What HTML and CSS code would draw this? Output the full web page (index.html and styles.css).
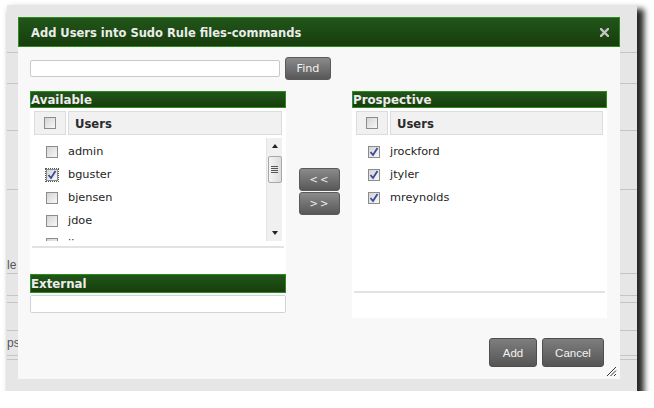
FILE: index.html
```html
<!DOCTYPE html>
<html>
<head>
<meta charset="utf-8">
<link rel="stylesheet" href="styles.css">
</head>
<body>
<div class="frame">
  <div class="page">
    <div class="prow r1"></div>
    <div class="prow r2"></div>
    <div class="prow r3"></div>
    <div class="prow r4"></div>
    <div class="prow r5"><span class="plabel">le <span class="colon">:</span></span></div>
    <div class="prow r6"></div>
    <div class="prow r7"></div>
    <div class="prow r8"></div>
    <div class="prow r9"><span class="plabel">ps<span class="colon">:</span></span></div>
    <div class="prow r10"></div>
  </div>

  <div class="dialog">
    <div class="titlebar">
      <span class="title">Add Users into Sudo Rule files-commands</span>
      <svg class="close" width="9" height="9" viewBox="0 0 9 9"><path d="M1 1 L8 8 M8 1 L1 8" stroke="#c4c4c4" stroke-width="2.4" stroke-linecap="square"/></svg>
    </div>
    <div class="body">
      <div class="search">
        <div class="search-input"></div>
        <div class="btn find">Find</div>
      </div>
      <div class="panels">
        <div class="col left">
          <div class="sect">Available</div>
          <div class="panel avail">
            <div class="thead">
              <div class="th th-check"><span class="cb"></span></div>
              <div class="th th-name">Users</div>
            </div>
            <div class="listwrap">
              <div class="list">
                <div class="row"><div class="cc"><span class="cb"></span></div><span class="name">admin</span></div>
                <div class="row"><div class="cc"><span class="cb on focus"><svg width="10" height="10" viewBox="0 0 10 10"><path d="M1.5 5 L4 8 L8.5 1" fill="none" stroke="#3a4a9a" stroke-width="1.8"/></svg></span></div><span class="name">bguster</span></div>
                <div class="row"><div class="cc"><span class="cb"></span></div><span class="name">bjensen</span></div>
                <div class="row"><div class="cc"><span class="cb"></span></div><span class="name">jdoe</span></div>
                <div class="row"><div class="cc"><span class="cb"></span></div><span class="name">jjones</span></div>
              </div>
              <div class="scrollbar">
                <div class="arrow up"></div>
                <div class="thumb"><span></span><span></span><span></span><span></span></div>
                <div class="track"></div>
                <div class="arrow down"></div>
              </div>
            </div>
            <div class="sep"></div>
          </div>
          <div class="sect ext">External</div>
          <div class="ext-input"></div>
        </div>

        <div class="col mid">
          <div class="btn move">&lt;&lt;</div>
          <div class="btn move">&gt;&gt;</div>
        </div>

        <div class="col right">
          <div class="sect">Prospective</div>
          <div class="panel prosp">
            <div class="thead">
              <div class="th th-check"><span class="cb"></span></div>
              <div class="th th-name">Users</div>
            </div>
            <div class="list plist">
              <div class="row"><div class="cc"><span class="cb on"><svg width="10" height="10" viewBox="0 0 10 10"><path d="M1.5 5 L4 8 L8.5 1" fill="none" stroke="#3a4a9a" stroke-width="1.8"/></svg></span></div><span class="name">jrockford</span></div>
              <div class="row"><div class="cc"><span class="cb on"><svg width="10" height="10" viewBox="0 0 10 10"><path d="M1.5 5 L4 8 L8.5 1" fill="none" stroke="#3a4a9a" stroke-width="1.8"/></svg></span></div><span class="name">jtyler</span></div>
              <div class="row"><div class="cc"><span class="cb on"><svg width="10" height="10" viewBox="0 0 10 10"><path d="M1.5 5 L4 8 L8.5 1" fill="none" stroke="#3a4a9a" stroke-width="1.8"/></svg></span></div><span class="name">mreynolds</span></div>
            </div>
            <div class="sep"></div>
          </div>
        </div>
      </div>
      <div class="footer">
        <div class="btn add">Add</div>
        <div class="btn cancel">Cancel</div>
      </div>
    </div>
    <svg class="grip" width="11" height="11" viewBox="0 0 11 11"><path d="M10 1 L1 10 M10 4.5 L4.5 10 M10 8 L8 10" stroke="#333" stroke-width="1"/></svg>
  </div>
</div>
</body>
</html>
```

FILE: styles.css
```css
* { box-sizing: border-box; }
html, body { margin: 0; padding: 0; background: #ffffff; }
body { font-family: "DejaVu Sans", Verdana, sans-serif; }

.frame {
  position: relative;
  margin: 5px 0 0 7px;
  width: 630px;
  height: 386px;
  background: #e6e6e6;
  box-shadow: 5px 6px 6px 2px rgba(0,0,0,0.85);
  overflow: visible;
}

.page { display: flex; flex-direction: column; }
.prow { box-sizing: content-box; border-bottom: 1px solid #c9c4bf; flex: none; position: relative; }
.r1 { height: 47px; }
.r2 { height: 30px; }
.r3 { height: 46px; }
.r4 { height: 58px; }
.r5 { height: 83px; display: flex; align-items: flex-end; }
.r6 { height: 21px; }
.r7 { height: 6px; }
.r8 { height: 27px; }
.r9 { height: 24px; display: flex; align-items: center; }
.r10 { height: 3px; }
.plabel { font-family: "Liberation Sans", Arial, sans-serif; font-size: 12px; color: #555; line-height: 14px; }
.r5 .plabel { margin-bottom: 1px; }
.colon { color: #e0a040; }

.dialog {
  position: absolute;
  left: 11px;
  top: 12px;
  width: 602px;
  height: 362px;
  background: #f8f8f8;
  display: flex;
  flex-direction: column;
}

.titlebar {
  height: 30px;
  border: 1px solid #2e8c1e;
  background: linear-gradient(#21561a, #173d0c);
  display: flex;
  align-items: center;
  justify-content: space-between;
  padding: 1px 10px 0 12px;
}
.title { font-weight: bold; font-size: 11.5px; color: #ececec; line-height: 14px; }
.close { display: block; }

.body { padding: 10px 13px 0 12px; flex: 1; display: flex; flex-direction: column; }

.search { display: flex; align-items: center; height: 23px; }
.search-input {
  width: 250px; height: 17px;
  border: 1px solid #c9c9c9; border-radius: 2px;
  background: #fff;
}
.btn {
  background: linear-gradient(#8a8a8a, #585858);
  border: 1px solid #5a5a5a;
  border-radius: 3px;
  color: #f2f2f2;
  display: flex; align-items: center; justify-content: center;
}
.find { margin-left: 5px; width: 46px; height: 23px; font-size: 11.2px; }

.panels { display: flex; margin-top: 11px; }
.col { display: flex; flex-direction: column; flex: none; }
.left { width: 256px; }
.mid { width: 66px; align-items: center; padding-top: 77px; gap: 1px; }
.right { width: 255px; }

.sect {
  height: 17px;
  border: 1px solid #2e8c1e;
  background: linear-gradient(#21561a, #173d0c);
  color: #ececec;
  font-weight: bold;
  font-size: 11.8px;
  line-height: 16px;
  padding-left: 0px;
}
.sect.ext { height: 19px; margin-top: 1px; line-height: 18px; }

.panel { background: #fff; padding: 3px 2px 0 2px; display: flex; flex-direction: column; }
.avail { height: 165px; }
.prosp { height: 210px; }

.thead { display: flex; gap: 2px; padding: 0 2px; height: 24px; }
.th { border: 1px solid #dcdcdc; background: #f1f1f1; height: 24px; display: flex; align-items: center; }
.th-check { width: 32px; justify-content: center; }
.th-name { width: 214px; padding-left: 6px; padding-top: 1px; font-weight: bold; font-size: 11.6px; color: #2a2a2a; }
.prosp .th-name { width: 213px; }

.cb {
  width: 12px; height: 12px;
  border: 1px solid #8c8c8c;
  background: linear-gradient(135deg, #d4d4d4, #f8f8f8);
  display: flex; align-items: center; justify-content: center;
  flex: none;
}
.cb svg { display: block; }
.cb.focus { outline: 1px dotted #555; outline-offset: 0px; }

.listwrap { display: flex; margin-top: 3px; height: 103px; padding: 0 2px; }
.list { flex: 1; overflow: hidden; padding-top: 2px; }
.plist { flex: none; height: 156px; padding: 5px 2px 0 2px; }

.row { height: 23px; display: flex; align-items: center; }
.cc { width: 34px; display: flex; justify-content: center; padding-left: 1px; }
.name { font-size: 11.3px; color: #1e1e1e; }

.scrollbar {
  width: 16px;
  background: #f0f0f0;
  border-left: 1px solid #e4e4e4;
  display: flex; flex-direction: column; align-items: center;
}
.arrow { width: 15px; height: 16px; display: flex; align-items: center; justify-content: center; flex: none; }
.arrow.up::after { content: ""; border-left: 3px solid transparent; border-right: 3px solid transparent; border-bottom: 4px solid #222; }
.arrow.down::after { content: ""; border-left: 3px solid transparent; border-right: 3px solid transparent; border-top: 4px solid #222; }
.thumb {
  width: 14px; height: 27px; margin-top: 2px;
  border: 1px solid #a8a8a8; border-radius: 2px;
  background: linear-gradient(90deg, #f4f4f4, #dcdcdc);
  display: flex; flex-direction: column; align-items: center; justify-content: center; gap: 1px;
  flex: none;
}
.thumb span { width: 7px; height: 1px; background: #555; }
.track { flex: 1; }

.sep { height: 2px; background: #e2e2e2; margin-top: 5px; }
.prosp .sep { margin-top: 0; }

.ext-input {
  height: 18px; margin-top: 2px;
  border: 1px solid #cfd4dc; border-radius: 2px;
  background: #fff;
}

.move {
  width: 41px; height: 23px;
  font-size: 10px; letter-spacing: 2px; padding-left: 2px;
  color: #eeeeee;
}

.footer { display: flex; justify-content: flex-end; gap: 5px; margin-top: 20px; padding-right: 3px; }
.footer .btn { height: 29px; font-family: "Liberation Sans", Arial, sans-serif; font-size: 11.5px; background: linear-gradient(#7e7e7e, #555); border-color: #4e4e4e; }
.add { width: 48px; }
.cancel { width: 62px; }

.grip { position: absolute; right: 3px; bottom: 2px; }
```
